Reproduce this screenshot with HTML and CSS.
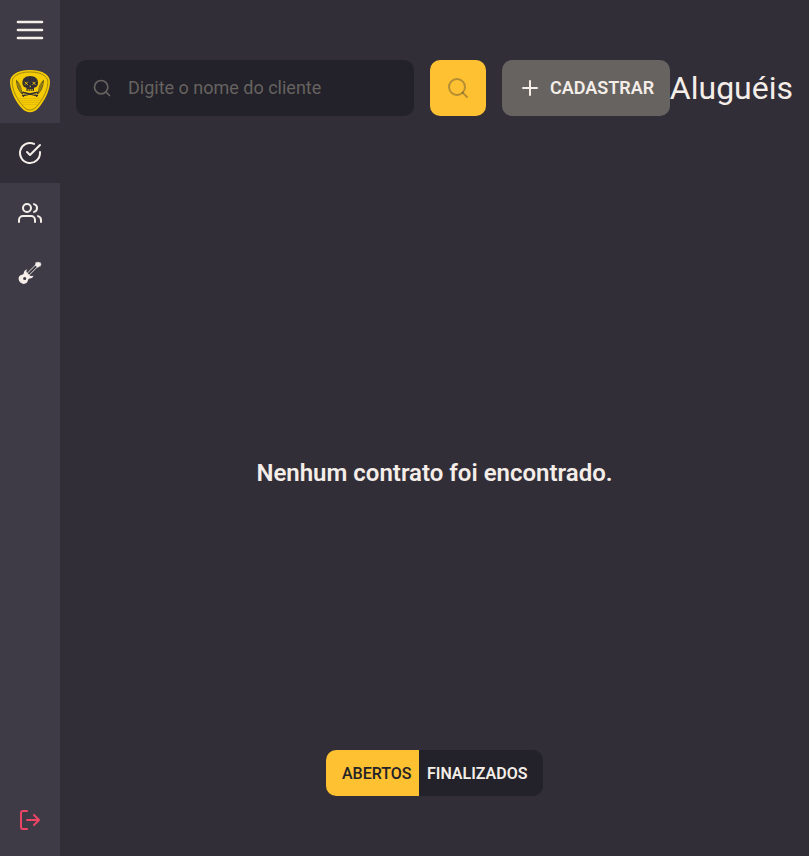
FILE: index.html
```html
<!DOCTYPE html>
<html lang="pt-BR">
<head>
<meta charset="utf-8">
<title>Aluguéis</title>
<link rel="stylesheet" href="styles.css">
</head>
<body>
<div class="app">
  <nav class="sidebar">
    <button class="menu" aria-label="Menu"><svg class="icon" width="32" height="32" viewBox="0 0 24 24"><path d="M3 12h18M3 6h18M3 18h18"/></svg></button>
    <div class="logo">
      <svg width="40" height="44" viewBox="0 0 40 44">
        <path fill="#f5cb05" d="M20 1C26.500 1 32 2.300 36 5.200c3.200 2.300 4.300 5.500 3.900 9.300C39 23.500 34 33 28 39.500c-5 5-11 5-16 0C6 33.500 1 23.500.1 14.500-.3 10.700.8 7.500 4 5.200 8 2.300 13.500 1 20 1z"/>
        <path fill="none" stroke="#7d6c16" stroke-width=".7" d="M20 3c6 0 10.800 1.100 14.500 3.700 2.800 2 3.700 4.700 3.300 8C37 23 32 31.500 26.500 37.700c-4 4.300-9 4.300-13 0C8 31.500 3 23 2.200 14.700c-.4-3.300.5-6 3.300-8C9.200 4.100 14 3 20 3z"/>
        <path fill="#6a5c1b" d="M6 10.500c2.500 2 4.500 5 5.500 8.500l1 6.500C8.500 23 6 17 6 10.500zM34 10.500c-2.500 2-4.500 5-5.500 8.500l-1 6.500c4-2.500 6.500-8.500 6.500-15z"/>
        <path fill="none" stroke="#d7b20a" stroke-width=".5" d="M7 14l4 9M8.500 14l3 7M33 14l-4 9M31.500 14l-3 7"/>
        <path fill="#312e35" d="M20.200 7c5 0 7.800 2.800 7.800 6.700 0 2-.7 3.300-1.800 4.300l-2.200.7v3h-7.600v-3l-2.200-.7c-1.100-1-1.800-2.300-1.800-4.300 0-3.900 2.800-6.700 7.800-6.700z"/>
        <path fill="none" stroke="#f5cb05" stroke-width=".9" d="M14.800 12.800l3 3m0-3l-3 3M22.500 12.800l3 3m0-3l-3 3M20.200 16.500v1.800M18.200 20v1.700M20.200 20v1.700M22.200 20v1.700"/>
        <path fill="none" stroke="#312e35" stroke-width="1.300" stroke-linecap="round" d="M13.500 23.500l13 3M26.500 23.500l-13 3M13 23l-.6 1.200M27 23l.6 1.200M13.500 27.200l-1-1M26.500 27.200l1-1"/>
        <path fill="none" stroke="#d6ae05" stroke-width=".5" d="M7 29.500h26M9 31.500h22M11 33.500h18M12.500 35.500h15"/>
      </svg>
    </div>
    <a class="item active"><svg class="icon" width="24" height="24" viewBox="0 0 24 24"><path d="M22 11.080V12a10 10 0 1 1-5.930-9.140"/><path d="M22 4L12 14.010l-3-3"/></svg></a>
    <a class="item"><svg class="icon" width="24" height="24" viewBox="0 0 24 24"><path d="M17 21v-2a4 4 0 0 0-4-4H5a4 4 0 0 0-4 4v2"/><circle cx="9" cy="7" r="4"/><path d="M23 21v-2a4 4 0 0 0-3-3.870M16 3.130a4 4 0 0 1 0 7.750"/></svg></a>
    <a class="item"><svg width="24" height="24" viewBox="0 0 24 24">
      <path fill="#f4ede8" d="M17 4.200L17.800 1l1.600.4L20 .6l1 .8 1.500-.4-.1 1.300 1.300.7-1.100 1 .3 1.300-1.700.2-1.400 1.300z"/>
      <path fill="none" stroke="#f4ede8" stroke-width=".9" d="M17.900 3.600L7.800 13.700M19.800 5.500L9.700 15.600"/>
      <path fill="#f4ede8" fill-rule="evenodd" d="M9.300 8.600c-2 .2-3.200 1.500-3.400 3-.2 1.400-.7 1.900-2 2.200-2.300.4-3.500 2-3.300 4.300.2 2.600 2.200 4.700 4.900 4.800 2.500.1 4-1.200 4.400-3.300.2-1.200.7-1.700 2-2 1.900-.3 3.200-1.400 3.600-3.200-1.500.8-2.900.7-3.600 0L8.700 11.200c-.6-.7-.3-1.700.6-2.600zM6.700 15.900a1.600 1.600 0 1 1 0 3.200 1.600 1.600 0 0 1 0-3.200z"/>
    </svg></a>
    <a class="logout"><svg class="icon" width="24" height="24" viewBox="0 0 24 24"><path d="M9 21H5a2 2 0 0 1-2-2V5a2 2 0 0 1 2-2h4M16 17l5-5-5-5M21 12H9"/></svg></a>
  </nav>
  <main class="content">
    <header class="header">
      <label class="field">
        <svg class="icon" width="20" height="20" viewBox="0 0 24 24"><circle cx="11" cy="11" r="8"/><path d="M21 21l-4.350-4.350"/></svg>
        <input type="text" placeholder="Digite o nome do cliente">
      </label>
      <button class="search" aria-label="Buscar"><svg class="icon" width="24" height="24" viewBox="0 0 24 24"><circle cx="11" cy="11" r="8"/><path d="M21 21l-4.350-4.350"/></svg></button>
      <button class="create"><svg class="icon" width="24" height="24" viewBox="0 0 24 24"><path d="M12 5v14M5 12h14"/></svg><span>CADASTRAR</span></button>
      <h1>Aluguéis</h1>
    </header>
    <section class="empty"><h2>Nenhum contrato foi encontrado.</h2></section>
    <footer class="tabs">
      <button class="tab open">ABERTOS</button><button class="tab done">FINALIZADOS</button>
    </footer>
  </main>
</div>
</body>
</html>
```
FILE: styles.css
```css
* { box-sizing: border-box; margin: 0; padding: 0; }
body { background: #312e38; color: #f4ede8; font-family: Roboto, sans-serif; }
button, input { font: inherit; color: inherit; border: 0; background: none; }
svg { display: block; flex-shrink: 0; }
.icon { fill: none; stroke: currentColor; stroke-width: 2; stroke-linecap: round; stroke-linejoin: round; }
.app { display: flex; height: 100vh; }
.sidebar { width: 60px; background: #3e3b47; display: flex; flex-direction: column; }
.menu, .item { height: 60px; display: flex; align-items: center; justify-content: center; }
.logo { height: 63px; padding-top: 9px; display: flex; justify-content: center; }
.active { background: #312e38; }
.logout { margin-top: auto; height: 72px; display: flex; align-items: center; justify-content: center; color: #ed4566; }
.content { flex: 1; min-width: 0; padding: 60px 16px; display: flex; flex-direction: column; }
.header { display: flex; height: 56px; align-items: center; }
.field { width: 338px; height: 56px; border-radius: 10px; background: #232129; display: flex; align-items: center; padding: 16px; color: #666360; }
.field input { flex: 1; min-width: 0; margin-left: 16px; padding-bottom: 2px; font-size: 18px; outline: 0; }
.field input::placeholder { color: #666360; opacity: 1; }
.search { width: 56px; height: 56px; margin: 0 16px; border-radius: 10px; background: #fdc131; color: rgba(49, 46, 56, .35); display: flex; align-items: center; justify-content: center; }
.create { width: 168px; height: 56px; border-radius: 10px; background: #666360; display: flex; align-items: center; padding-left: 16px; font-size: 18px; font-weight: 600; }
.create span { margin-left: 8px; padding-bottom: 2px; }
h1 { font-size: 32px; font-weight: 400; white-space: nowrap; }
.empty { flex: 1; display: flex; align-items: center; justify-content: center; padding-top: 79px; }
.empty h2 { font-size: 24px; font-weight: 600; }
.tabs { display: flex; align-self: center; height: 46px; border-radius: 10px; overflow: hidden; background: #232129; }
.tab { font-size: 16px; font-weight: 600; white-space: nowrap; }
.open { width: 93px; padding: 0 8px 0 16px; background: #fdc131; color: #232129; font-weight: 500; }
.done { width: 124px; padding: 0 16px 0 8px; }
```
